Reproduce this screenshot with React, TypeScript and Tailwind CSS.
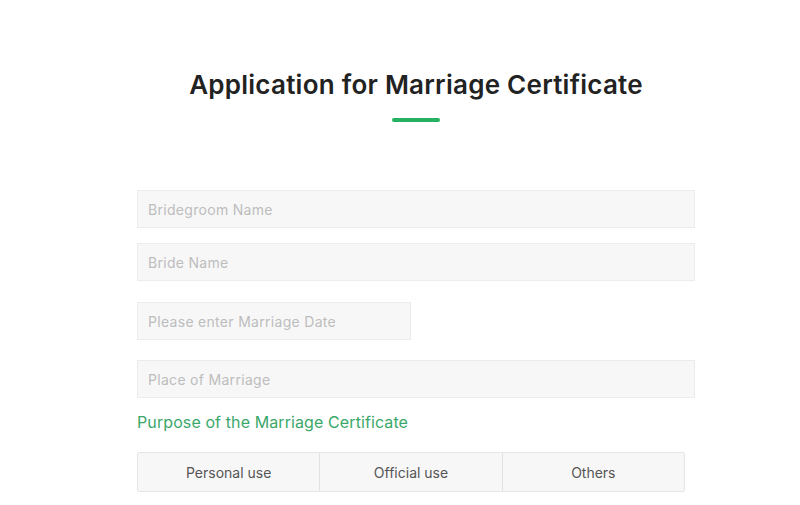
import React from "react";

const font = { fontFamily: "Inter, 'Open Sans', sans-serif" };

function Field({ placeholder, half }: { placeholder: string; half?: boolean }) {
  return (
    <div
      className={`h-[38px] ${half ? "w-[274px]" : "w-[558px]"} bg-[#f7f7f8] border border-[#ececee] flex items-center px-[10px] text-[14px] text-[#bdbdbd] tracking-[0.3px]`}
    >
      {placeholder}
    </div>
  );
}

export default function App() {
  return (
    <div className="w-[800px] h-[505px] bg-white overflow-hidden" style={font}>
      <div className="ml-[137px] w-[558px] pt-[68px] flex flex-col">
        <h1 className="text-center text-[26px] leading-[34px] font-semibold text-[#222] tracking-[0.25px]">
          Application for Marriage Certificate
        </h1>
        <div className="mx-auto mt-[16px] w-[48px] h-[4px] rounded-full bg-[#27b064]" />
        <div className="mt-[68px] flex flex-col">
          <Field placeholder="Bridegroom Name" />
          <div className="h-[15px]" />
          <Field placeholder="Bride Name" />
          <div className="h-[21px]" />
          <Field placeholder="Please enter Marriage Date" half />
          <div className="h-[20px]" />
          <Field placeholder="Place of Marriage" />
          <div className="mt-[14px] text-[16px] leading-[20px] text-[#3aa86a] tracking-[0.1px]">
            Purpose of the Marriage Certificate
          </div>
          <div className="mt-[20px] w-[548px] h-[40px] flex border border-[#e6e6e8] rounded-[2px] bg-[#f7f7f8] text-[14px] text-[#555]">
            <div className="flex-1 flex items-center justify-center">Personal use</div>
            <div className="flex-1 flex items-center justify-center border-l border-[#e2e2e4]">Official use</div>
            <div className="flex-1 flex items-center justify-center border-l border-[#e2e2e4]">Others</div>
          </div>
        </div>
      </div>
    </div>
  );
}
